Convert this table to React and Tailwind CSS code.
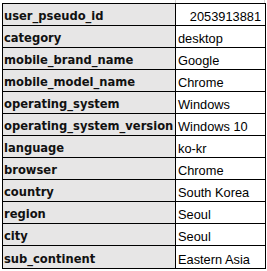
import React from "react";

const rows = [
  ["user_pseudo_id", "2053913881", true],
  ["category", "desktop"],
  ["mobile_brand_name", "Google"],
  ["mobile_model_name", "Chrome"],
  ["operating_system", "Windows"],
  ["operating_system_version", "Windows 10"],
  ["language", "ko-kr"],
  ["browser", "Chrome"],
  ["country", "South Korea"],
  ["region", "Seoul"],
  ["city", "Seoul"],
  ["sub_continent", "Eastern Asia"],
];

export default function App() {
  return (
    <div className="w-[267px] h-[271px] bg-white overflow-hidden">
      <div className="h-[3px] flex">
        <div className="w-[176px] border-r border-[#d4d4d4]" />
        <div className="w-[89px] border-r border-[#d4d4d4]" />
      </div>
      <div className="flex">
        <div className="w-[2px]" />
        <div className="w-[264px] border border-black">
          {rows.map(([k, v, right], i) => (
            <div
              key={k}
              className={`flex h-[22px] ${i < rows.length - 1 ? "border-b border-black" : "h-[21px]"}`}
            >
              <div
                className="w-[173px] bg-[#e7e6e6] border-r border-black flex items-end pl-[1px] pb-[3px] text-[12.8px] leading-[13px] font-bold text-[#111] whitespace-nowrap"
                style={{ fontFamily: '"DejaVu Sans Condensed", "DejaVu Sans", sans-serif', fontStretch: "condensed" }}
              >
                {k}
              </div>
              <div
                className={`w-[88px] flex items-end pb-[2px] text-[12.8px] leading-[13px] text-black whitespace-nowrap ${right ? "justify-end pr-[3px]" : "pl-[2px]"}`}
                style={{ fontFamily: '"Liberation Sans", Arial, sans-serif' }}
              >
                {v}
              </div>
            </div>
          ))}
        </div>
      </div>
    </div>
  );
}
